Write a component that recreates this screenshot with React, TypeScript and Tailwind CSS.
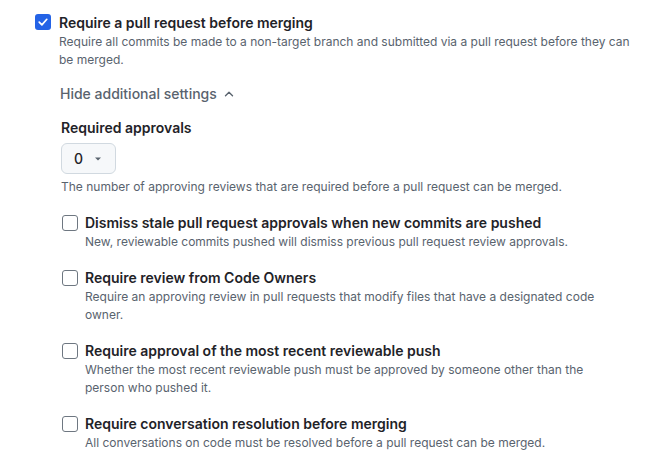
import React from "react";

function Check({ checked }: { checked?: boolean }) {
  if (checked) {
    return (
      <div className="mt-[1px] flex h-4 w-4 shrink-0 items-center justify-center rounded-[3px] bg-[#2463e6]">
        <svg width="12" height="12" viewBox="0 0 12 12" fill="none">
          <path d="M2.2 6.2 L4.9 8.9 L9.8 3.3" stroke="white" strokeWidth="1.7" strokeLinecap="round" strokeLinejoin="round" />
        </svg>
      </div>
    );
  }
  return <div className="mt-[2px] h-4 w-4 shrink-0 rounded-[3px] border border-[#6e7781] bg-white" />;
}

function Option({ title, desc }: { title: string; desc: string }) {
  return (
    <div className="flex gap-[7px]">
      <Check />
      <div className="w-[532px]">
        <div className="text-[14px] font-semibold leading-[20px] text-[#1f2328]">{title}</div>
        <div className="text-[12px] leading-[18px] text-[#59636e]">{desc}</div>
      </div>
    </div>
  );
}

export default function App() {
  return (
    <div
      className="h-[472px] w-[669px] bg-white pl-[35px] pt-[13px]"
      style={{ fontFamily: "Inter, 'Noto Sans', sans-serif" }}
    >
      <div className="flex gap-[8px]">
        <Check checked />
        <div className="w-[582px]">
          <div className="text-[14px] font-semibold leading-[20px] text-[#1f2328]">
            Require a pull request before merging
          </div>
          <div className="text-[12px] leading-[18px] text-[#59636e]">
            Require all commits be made to a non-target branch and submitted via a pull request before they can be merged.
          </div>
          <div className="mt-[15px] flex items-center gap-[6px] pl-[1px] text-[14px] font-medium leading-[20px] text-[#59636e]">
            Hide additional settings
            <svg width="12" height="12" viewBox="0 0 12 12" fill="none">
              <path d="M2.5 7.8 L6 4.3 L9.5 7.8" stroke="#59636e" strokeWidth="1.4" strokeLinecap="round" strokeLinejoin="round" />
            </svg>
          </div>
          <div className="mt-[14px] pl-[2px] text-[14px] font-semibold leading-[20px] text-[#1f2328]">
            Required approvals
          </div>
          <div className="mt-[5px] pl-[2px]">
            <div className="flex h-[31px] w-[55px] items-center gap-[11px] rounded-[6px] border border-[#d1d9e0] bg-[#f6f8fa] pl-[12px] text-[14px] font-medium text-[#1f2328]">
              0
              <svg width="8" height="8" viewBox="0 0 8 8">
                <path d="M1 2.5 L7 2.5 L4 5.5 Z" fill="#59636e" />
              </svg>
            </div>
          </div>
          <div className="mt-[4px] pl-[2px] text-[12px] leading-[18px] text-[#59636e]">
            The number of approving reviews that are required before a pull request can be merged.
          </div>
          <div className="mt-[17px] flex flex-col gap-[17px] pl-[3px]">
            <Option
              title="Dismiss stale pull request approvals when new commits are pushed"
              desc="New, reviewable commits pushed will dismiss previous pull request review approvals."
            />
            <Option
              title="Require review from Code Owners"
              desc="Require an approving review in pull requests that modify files that have a designated code owner."
            />
            <Option
              title="Require approval of the most recent reviewable push"
              desc="Whether the most recent reviewable push must be approved by someone other than the person who pushed it."
            />
            <Option
              title="Require conversation resolution before merging"
              desc="All conversations on code must be resolved before a pull request can be merged."
            />
          </div>
        </div>
      </div>
    </div>
  );
}
